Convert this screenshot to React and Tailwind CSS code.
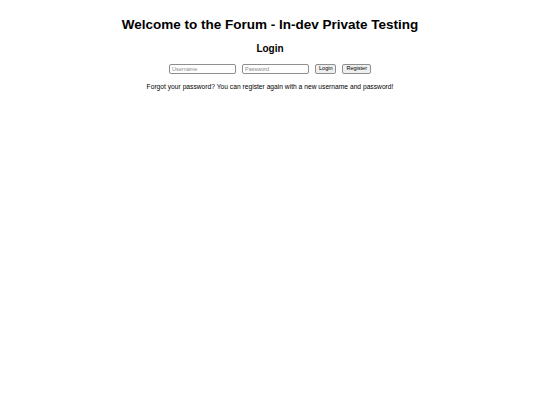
export default function App() {
  return (
    <div className="min-h-[405px] bg-white text-black font-['Liberation_Sans',Arial,sans-serif]">
      <div className="flex flex-col items-center pt-[17px]">
        <h1 className="text-[13.5px] font-bold leading-[16px]">Welcome to the Forum - In-dev Private Testing</h1>
        <h2 className="mt-[10px] text-[10px] font-bold leading-[12px]">Login</h2>
        <form className="mt-[9px] flex items-center gap-[6px] text-[5.5px]" onSubmit={(e) => e.preventDefault()}>
          <input
            type="text"
            placeholder="Username"
            className="h-[10px] w-[67px] rounded-[2px] border border-[#8f8f8f] px-[2px] text-[5.5px] placeholder:text-[#8a8a8a] outline-none"
          />
          <input
            type="password"
            placeholder="Password"
            className="h-[10px] w-[67px] rounded-[2px] border border-[#8f8f8f] px-[2px] text-[5.5px] placeholder:text-[#8a8a8a] outline-none"
          />
          <button className="h-[10px] rounded-[2px] border border-[#8f8f8f] bg-[#efefef] px-[3px] text-[5.5px] leading-none">Login</button>
          <button className="h-[10px] rounded-[2px] border border-[#8f8f8f] bg-[#efefef] px-[3px] text-[5.5px] leading-none">Register</button>
        </form>
        <p className="mt-[9px] text-[6.7px] leading-[8px]">
          Forgot your password? You can register again with a new username and password!
        </p>
      </div>
    </div>
  );
}
